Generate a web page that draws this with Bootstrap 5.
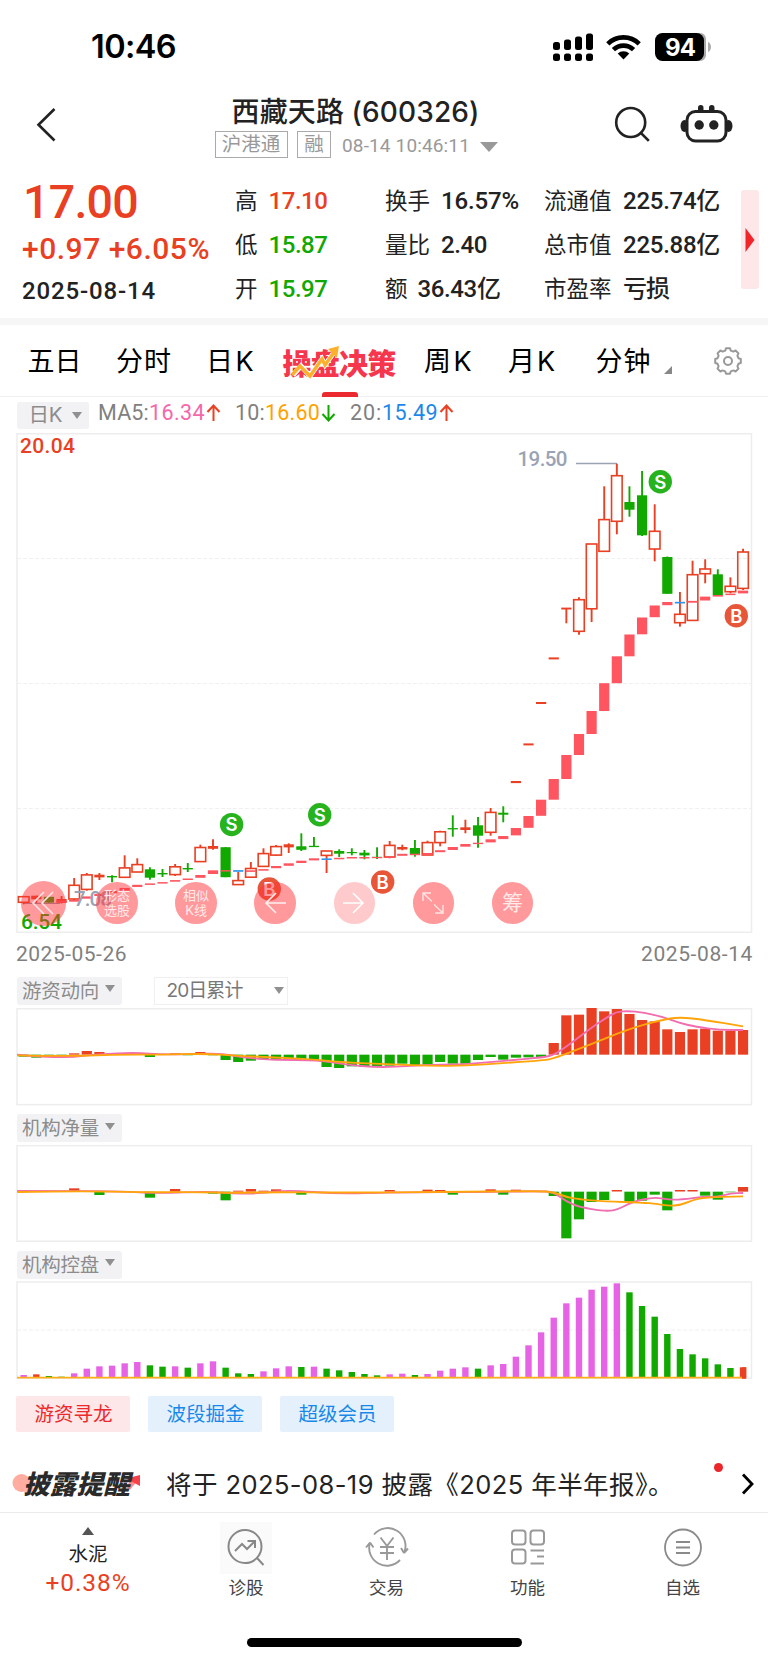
<!DOCTYPE html>
<html lang="zh-CN">
<head>
<meta charset="utf-8">
<meta name="viewport" content="width=device-width, initial-scale=1">
<title>西藏天路 (600326)</title>
<link href="https://cdn.jsdelivr.net/npm/bootstrap@5.3.0/dist/css/bootstrap.min.css" rel="stylesheet">
<style>
  :root { --up:#e93f22; --down:#11a800; --ink:#222; --soft:#808080; }
  body { width:768px; margin:0 auto; background:#fff; color:var(--ink); font-family:"Inter","Noto Sans CJK SC",sans-serif; line-height:1; overflow-x:hidden; }
  .num { font-family:"Roboto","Noto Sans CJK SC",sans-serif; }
  .fit { display:inline-block; white-space:nowrap; }
  .up { color:var(--up); } .down { color:var(--down); }
  svg { display:block; flex:none; }
  .statusbar { height:90px; padding:3px 56px 0 91px; }
  .clock { font-size:32.5px; font-weight:600; color:#000; padding-top:2px; }
  .titlebar { height:80px; }
  .stock-name { font-size:28px; font-weight:500; line-height:36px; height:37px; }
  .tagbox { border:1.5px solid #aaa; color:#999; font-size:19.5px; height:27px; line-height:24px; text-align:center; }
  .stamp { font-size:19px; color:#999; padding-top:2px; }
  .quote { height:148px; }
  .price { font-size:46.5px; font-weight:500; line-height:48px; }
  .change { font-size:30px; font-weight:500; line-height:44px; }
  .qcol > div { height:44px; line-height:44px; font-size:22.5px; white-space:nowrap; display:flex; align-items:center; }
  .qcol .num { font-size:24px; font-weight:500; }
  .more { width:18px; height:99px; background:#fde7e9; border-radius:3px; }
  .band { height:7px; background:#f6f6f6; }
  .periods { height:72px; border-bottom:1.5px solid #f0f0f0; font-size:27px; color:#000; }
  .periods .fit { line-height:74px; }
  .decide { width:114px; height:72px; }
  .decide b { font-family:"Noto Sans CJK SC",sans-serif; font-weight:900; font-size:29px; color:#f5364d; }
  .underline-bar { bottom:0; left:39px; width:36px; height:5px; border-radius:3px 3px 0 0; background:#ea2a2e; }
  .marow { height:36px; color:var(--soft); font-size:21.5px; }
  .pill { background:#f2f2f4; border-radius:3px; color:#8c8c8c; font-size:19.5px; }
  .tri { width:0; height:0; border:5px solid transparent; border-top:7px solid #909090; border-bottom:0; flex:none; }
  .dates { height:42px; padding:0 15px 0 16px; font-size:21px; color:var(--soft); }
  .subhead { padding-left:16.5px; }
  .subhead .pill { height:28px; width:105px; padding:2px 5.5px 0; }
  .picker { width:134px; height:28px; border:1.5px solid #f0f0f2; color:#777; font-size:19px; padding:0 3px 0 12px; }
  .tools { left:20.5px; bottom:7.5px; }
  .tool { width:41.4px; height:41.4px; border-radius:50%; background:rgba(255,52,56,.5); color:#ffe9e9; font-size:13px; line-height:14.5px; text-align:center; margin-left:37.7px; flex:none; }
  .tool:first-child { width:45px; height:45px; margin-left:0; }
  .tool:nth-child(2) { margin-left:30.8px; }
  .tool.dim { background:rgba(255,52,56,.26); }
  .chip { width:114px; height:36px; border-radius:2px; background:#e4f1fc; color:#1788ea; font-size:19.5px; padding-top:1px; }
  .chip.hot { background:#fde7e8; color:#ec2a2d; }
  .notice { height:65px; border-bottom:1.5px solid #ebebeb; }
  .notice-text { font-size:25.5px; }
  .notice-logo { width:130px; height:34px; }
  .notice-logo b { left:11px; top:1px; font-weight:900; font-style:italic; font-size:26.5px; line-height:34px; color:#2a2a2a; font-family:"Noto Sans CJK SC",sans-serif; z-index:1; }
  .tabs { height:107px; color:#444; font-size:17.5px; }
  .tabs .cell { flex:none; }
  .home { width:275px; height:9px; border-radius:5px; background:#000; }
</style>
</head>
<body>

<header class="statusbar d-flex align-items-center justify-content-between">
  <span class="clock fit" data-w="85">10:46</span>
  <div class="d-flex align-items-center">
    <svg width="40" height="28" viewBox="0 0 40 28">
      <g fill="#000"><rect x="0" y="9" width="7" height="8" rx="2.5"/><rect x="11" y="6.500" width="7" height="10.500" rx="2.500"/><rect x="22" y="3.500" width="7" height="13.500" rx="2.500"/><rect x="33" y="0.500" width="7" height="16.500" rx="2.500"/>
      <rect x="0" y="20.500" width="7" height="7.500" rx="2.500"/><rect x="11" y="20.500" width="7" height="7.500" rx="2.500"/><rect x="22" y="20.500" width="7" height="7.500" rx="2.500"/><rect x="33" y="20.500" width="7" height="7.500" rx="2.500"/></g>
    </svg>
    <svg style="margin-left:13px" width="35" height="26" viewBox="0 0 35 26">
      <g fill="none" stroke="#000" stroke-width="4.600"><path d="M1.800 9.800a22.500 22.500 0 0 1 31.400 0"/><path d="M7.400 15.700a14.600 14.600 0 0 1 20.200 0"/></g>
      <path d="M11.700 19.600a8.500 8.500 0 0 1 11.600 0L17.500 25.500z"/>
    </svg>
    <svg style="margin-left:14px" width="57" height="28" viewBox="0 0 57 28">
      <path d="M45 0h-3v28h3c4 0 6-3 6-7V7c0-4-2-7-6-7z" fill="#aaa"/><rect width="49" height="28" rx="7.500" fill="#000"/><path d="M53 9c4 1.500 4 8.500 0 10z" fill="#aaa"/>
      <text x="25.500" y="22.600" text-anchor="middle" font-family="Inter" font-size="24" font-weight="700" fill="#fff" textLength="31">94</text>
    </svg>
  </div>
</header>

<section class="titlebar d-flex align-items-start">
  <svg style="margin:16px 0 0 34px" width="24" height="38" viewBox="0 0 24 38"><path d="M20.500 3 4.500 18.700 20.500 34.500" fill="none" stroke="#222" stroke-width="2.600"/></svg>
  <div style="margin-left:156.500px;width:390px">
    <div class="stock-name" style="padding:4px 0 0 17px"><span class="fit" data-w="248">西藏天路 (600326)</span></div>
    <div class="d-flex align-items-center" style="margin-top:4px">
      <div class="tagbox" style="width:73px">沪港通</div>
      <div class="tagbox" style="width:34px;margin-left:9.500px">融</div>
      <span class="stamp num fit" style="margin-left:11px" data-w="128">08-14 10:46:11</span>
      <svg style="margin:4px 0 0 10px" width="18" height="10"><path d="M0 0h18L9 10z" fill="#999"/></svg>
    </div>
  </div>
  <svg style="margin:16px 0 0 9px" width="38" height="38" viewBox="0 0 38 38"><g fill="none" stroke="#222" stroke-width="2.600"><circle cx="16.700" cy="16.500" r="14.500"/><path d="m26.800 26.800 8 8"/></g></svg>
  <svg style="margin:14px 0 0 28.500px" width="54" height="40" viewBox="0 0 54 40">
    <g fill="#222"><rect x="18" y="1" width="5.500" height="9" rx="2.700"/><rect x="29" y="1" width="5.500" height="9" rx="2.700"/><ellipse cx="4.500" cy="22" rx="4" ry="6"/><ellipse cx="48.500" cy="22" rx="4" ry="6"/></g>
    <rect x="7" y="7.500" width="39" height="29.500" rx="8.500" fill="#fff" stroke="#222" stroke-width="3"/><circle cx="19.200" cy="21" r="4.700" fill="#222"/><circle cx="33.800" cy="21" r="4.700" fill="#222"/>
  </svg>
</section>

<section class="quote d-flex">
  <div style="margin-left:23px;width:212px">
    <div class="price num up" style="padding-top:8px"><span class="fit" data-w="115">17.00</span></div>
    <div class="change num up" style="margin:1px 0 0 -1px"><span class="fit" data-w="188">+0.97 +6.05%</span></div>
    <div class="num fit" style="font-size:24px;font-weight:500;line-height:40px;margin-left:-1px" data-w="134">2025-08-14</div>
  </div>
  <div class="qcol" style="width:150px;padding-top:9px">
    <div>高<span class="num up fit" style="margin-left:11px" data-w="59">17.10</span></div>
    <div>低<span class="num down fit" style="margin-left:11px" data-w="59">15.87</span></div>
    <div>开<span class="num down fit" style="margin-left:11px" data-w="59">15.97</span></div>
  </div>
  <div class="qcol" style="width:159px;padding-top:9px">
    <div>换手<span class="num fit" style="margin-left:11px" data-w="78">16.57%</span></div>
    <div>量比<span class="num fit" style="margin-left:11px" data-w="46">2.40</span></div>
    <div>额<span class="num fit" style="margin-left:10px" data-w="83">36.43亿</span></div>
  </div>
  <div class="qcol" style="width:197px;padding-top:9px">
    <div>流通值<span class="num fit" style="margin-left:11.500px" data-w="97">225.74亿</span></div>
    <div>总市值<span class="num fit" style="margin-left:11.500px" data-w="97">225.88亿</span></div>
    <div>市盈率<span class="num fit" style="margin-left:11.500px" data-w="46">亏损</span></div>
  </div>
  <div class="more d-flex align-items-center" style="margin-top:20px"><svg class="ms-1" width="10" height="24"><path d="M0.500 0 9.500 12 0.500 24z" fill="#f0262b"/></svg></div>
</section>
<div class="band"></div>

<nav class="periods d-flex">
  <span class="fit" style="margin-left:27.500px" data-w="54">五日</span>
  <span class="fit" style="margin-left:34.500px" data-w="56">分时</span>
  <span class="fit" style="margin-left:34px" data-w="50">日K</span>
  <div class="decide position-relative" style="margin-left:26.500px">
    <b class="fit" data-w="113">操盘决策</b>
    <svg class="position-absolute" style="left:7px;top:20px" width="52" height="36" viewBox="0 0 52 36"><path d="M3 30 11 21 20 31 32 14 35 20 45 6" fill="none" stroke="#fff" stroke-width="5"/><path d="M2 30 10 21 20 31 32 14 35 20 45 6" fill="none" stroke="#fcb02c" stroke-width="3.400"/><path d="M38 4 49 1 47 13z" fill="#fcb02c"/></svg>
    <span class="underline-bar position-absolute"></span>
  </div>
  <span class="fit" style="margin-left:27.500px" data-w="50">周K</span>
  <span class="fit" style="margin-left:34px" data-w="49">月K</span>
  <span class="fit" style="margin-left:38.500px" data-w="56">分钟</span>
  <svg style="margin:41px 0 0 12px" width="8" height="8"><path d="M8 0v8H0z" fill="#888"/></svg>
  <svg style="margin:21px 0 0 41px" width="30" height="30" viewBox="0 0 30 30"><g fill="none" stroke="#999" stroke-width="2"><path id="gear" stroke-linejoin="round"/><circle cx="15" cy="15" r="4"/></g></svg>
</nav>

<section class="marow num d-flex align-items-center">
  <div class="pill d-flex align-items-center" style="margin-left:16.500px;width:72px;height:27px;padding:1px 0 0 12px;font-size:20.500px"><span class="fit" data-w="34" style="font-family:Inter,'Noto Sans CJK SC'">日K</span><i class="tri" style="margin-left:9px"></i></div>
  <span class="fit" style="margin:-5px 0 0 9.500px" data-w="51">MA5:</span><span class="fit" style="margin-top:-5px;color:#f467ab" data-w="56">16.34</span>
  <svg style="margin:-5px 0 0 1px" width="15" height="18" viewBox="0 0 15 18"><path d="M7.500 17V2M1.500 8l6-6.500 6 6.500" fill="none" stroke="#e93f22" stroke-width="2"/></svg>
  <span class="fit" style="margin:-5px 0 0 14px" data-w="30">10:</span><span class="fit" style="margin-top:-5px;color:#ffa200" data-w="55">16.60</span>
  <svg style="margin:-5px 0 0 1px" width="15" height="18" viewBox="0 0 15 18"><path d="M7.500 1v15M1.500 10l6 6.500 6-6.500" fill="none" stroke="#11a800" stroke-width="2"/></svg>
  <span class="fit" style="margin:-5px 0 0 14px" data-w="32">20:</span><span class="fit" style="margin-top:-5px;color:#1e88ea" data-w="56">15.49</span>
  <svg style="margin:-5px 0 0 1px" width="15" height="18" viewBox="0 0 15 18"><path d="M7.500 17V2M1.500 8l6-6.500 6 6.500" fill="none" stroke="#e93f22" stroke-width="2"/></svg>
</section>

<section class="position-relative">
  <svg id="kline" width="768" height="500" viewBox="0 433 768 500"></svg>
  <div class="tools position-absolute d-flex align-items-center">
    <div class="tool d-flex align-items-center justify-content-center"><svg width="24" height="24" viewBox="0 0 24 24" fill="none" stroke="#ffe4e4" stroke-width="1.600"><path d="M13 1 2 12l11 11M22 1 11 12l11 11"/></svg></div>
    <div class="tool d-flex align-items-center justify-content-center">形态<br>选股</div>
    <div class="tool d-flex align-items-center justify-content-center">相似<br>K线</div>
    <div class="tool d-flex align-items-center justify-content-center"><svg width="22" height="22" viewBox="0 0 22 22" fill="none" stroke="#fff0f0" stroke-width="1.600"><path d="M22 11H2M12 1 2 11l10 10"/></svg></div>
    <div class="tool dim d-flex align-items-center justify-content-center"><svg width="22" height="22" viewBox="0 0 22 22" fill="none" stroke="#fff" stroke-width="1.600"><path d="M0 11h20M10 1l10 10-10 10"/></svg></div>
    <div class="tool d-flex align-items-center justify-content-center"><svg width="22" height="22" viewBox="0 0 22 22" fill="none" stroke="#ffe4e4" stroke-width="1.400"><path d="M1 9V1h8M1 1l9 8.500M21 13v8h-8M21 21l-9-8.500"/></svg></div>
    <div class="tool d-flex align-items-center justify-content-center" style="font-size:21px">筹</div>
  </div>
</section>
<div class="dates num d-flex align-items-center justify-content-between"><span class="fit" data-w="111">2025-05-26</span><span class="fit" data-w="112">2025-08-14</span></div>

<div class="subhead d-flex" style="height:33px;padding-top:1.500px">
  <div class="pill d-flex align-items-center"><span class="fit" data-w="77">游资动向</span><i class="tri" style="margin:-6px 0 0 6px"></i></div>
  <div class="picker d-flex align-items-center justify-content-between" style="margin-left:32px"><span class="fit" data-w="76">20日累计</span><i class="tri"></i></div>
</div>
<svg id="sub1" width="768" height="98" viewBox="0 1008 768 98"></svg>
<div class="subhead" style="height:39px;padding-top:8px"><div class="pill d-flex align-items-center"><span class="fit" data-w="77">机构净量</span><i class="tri" style="margin:-6px 0 0 6px"></i></div></div>
<svg id="sub2" width="768" height="97" viewBox="0 1145 768 97"></svg>
<div class="subhead" style="height:39px;padding-top:8.500px"><div class="pill d-flex align-items-center"><span class="fit" data-w="77">机构控盘</span><i class="tri" style="margin:-6px 0 0 6px"></i></div></div>
<svg id="sub3" width="768" height="99" viewBox="0 1281 768 99"></svg>

<div class="d-flex" style="height:68px;padding:16.400px 0 0 16.400px;gap:18px">
  <div class="chip hot d-flex align-items-center justify-content-center">游资寻龙</div>
  <div class="chip d-flex align-items-center justify-content-center">波段掘金</div>
  <div class="chip d-flex align-items-center justify-content-center">超级会员</div>
</div>

<section class="notice d-flex align-items-center">
  <div class="notice-logo position-relative" style="margin:4px 0 0 12px">
    <svg width="130" height="38" viewBox="0 0 130 38"><circle cx="9.500" cy="18" r="9" fill="#ffada0"/><circle cx="17" cy="25" r="5" fill="#ffb3a7"/><path d="M116 23 122 16" stroke="#ff8a8c" stroke-width="5"/><path d="M114 13.500 128 10V21z" fill="#f8404a"/></svg>
    <b class="fit position-absolute" data-w="107">披露提醒</b>
  </div>
  <span class="notice-text fit" style="margin:9px 0 0 24px" data-w="508">将于 2025-08-19 披露《2025 年半年报》。</span>
  <svg style="margin:-26px 0 0 40px" width="9" height="9"><circle cx="4.500" cy="4.500" r="4.500" fill="#ec252b"/></svg>
  <svg style="margin:7px 0 0 17px" width="15" height="24" viewBox="0 0 15 24"><path d="M3 2.500 12 12 3 21.500" fill="none" stroke="#000" stroke-width="2.800"/></svg>
</section>

<nav class="tabs d-flex text-center">
  <div class="cell" style="width:176px;padding-top:13.500px">
    <svg class="mx-auto" width="12" height="8"><path d="M0 8h12L6 0z" fill="#555"/></svg>
    <div style="font-size:19.500px;line-height:32px;margin-top:3px;color:#222">水泥</div>
    <div class="num up" style="font-size:24.500px;line-height:26px"><span class="fit" data-w="85">+0.38%</span></div>
  </div>
  <div class="cell" style="width:140px;padding-top:9px">
    <div class="mx-auto" style="width:52px;height:52px;background:#fafafa;padding:6px 7px"><svg width="38" height="40" viewBox="0 0 38 40" fill="none" stroke="#888" stroke-width="2"><circle cx="18" cy="18.500" r="16.500"/><path d="m30 30 6.500 7M8 23l7-7 5 5 8-8M20.500 13H28v7"/></svg></div>
    <div style="line-height:27px;">诊股</div>
  </div>
  <div class="cell" style="width:141px;padding-top:9px">
    <svg class="mx-auto" width="44" height="52" viewBox="0 0 44 52" fill="none" stroke="#999" stroke-width="1.900"><path d="M9 12.500A17.800 17.800 0 0 1 39 31M35 38A17.800 17.800 0 0 1 5 20.500M39 31l4-4.500M39 31l-3-5M5 20.500 1 25.500M5 20.500l3.500 5M15.500 15.500l6.500 8.500 6.500-8.500M22 24v14M15 25h14M15 31h14"/></svg>
    <div style="line-height:27px;">交易</div>
  </div>
  <div class="cell" style="width:141px;padding-top:9px">
    <svg class="mx-auto" width="36" height="52" viewBox="0 0 36 52" fill="none" stroke="#999" stroke-width="2"><rect x="2" y="8.500" width="13.500" height="14" rx="3"/><rect x="20.500" y="8.500" width="13.500" height="14" rx="3"/><rect x="2" y="27.500" width="13.500" height="14" rx="3"/><path d="M20.500 28.500H34M27 34.500h7M20.500 41.500H34"/></svg>
    <div style="line-height:27px;">功能</div>
  </div>
  <div class="cell" style="width:169px;padding-top:9px">
    <svg class="mx-auto" width="40" height="52" viewBox="0 0 40 52" fill="none" stroke="#8a8a8a" stroke-width="1.800"><circle cx="20" cy="25.500" r="18"/><path d="M13 20h14M13 25.500h14M13 31h14"/></svg>
    <div style="line-height:27px;">自选</div>
  </div>
</nav>
<div style="height:42px;padding-top:18px"><div class="home mx-auto"></div></div>

<script src="https://cdn.jsdelivr.net/npm/bootstrap@5.3.0/dist/js/bootstrap.bundle.min.js"></script>
<script>
  const UP = '#e93f22', DOWN = '#11a800', PINK = '#ff5560', BLUE = '#2b97f0';
  const X = i => 23.7 + 12.62 * i;
  const rect = (x, y, w, h, f) => `<rect x="${x}" y="${y}" width="${w}" height="${h}" fill="${f}"/>`;
  const line = (x1, y1, x2, y2, c, w = 1.9) => `<path d="M${x1} ${y1}L${x2} ${y2}" stroke="${c}" stroke-width="${w}"/>`;
  const frame = (t, b) => `<rect x="17" y="${t}" width="734.5" height="${b - t}" fill="none" stroke="#ededed" stroke-width="1.5"/>`;
  const grid = y => `<path d="M17 ${y}H751" stroke="#f0f0f0" stroke-width="1" stroke-dasharray="4 2"/>`;

  // [kind, body top, body bottom, high, low]; h = hollow, r = solid red, g = solid green; chart units
  const candles = [
    ['h',896.7,902.3,896,904.3],['r',895.7,899.3,895.7,903],['g',896.8,902.6,896.8,902.6],['r',899,902.7,896,903.5],
    ['h',885.3,899,878,900.7],['h',874.9,889.4,873,890.7],['r',874.7,877.4,873,880],['g',876,877.4,875.3,882.3],
    ['h',867.9,877.3,855.3,877.3],['h',864.6,872,858.3,872],['g',869.3,877.7,867.3,879.7],['g',873,874.4,869,877],
    ['h',866.8,874.6,864,876],['g',868,869.4,863,872],['h',847.5,861.6,844.7,861.6],['r',846,848.8,839.3,849.7],
    ['g',847.2,877.2,847.2,877.2],['h',880.6,884.6,872,884.6],['h',868.5,877.2,862,877.2],['h',853.6,866.4,848.3,866.4],
    ['h',846.6,855.1,845,856],['r',844.3,847.4,843.3,853],['g',846.3,849.8,833.3,851],['g',845.8,847.1,837,847],
    ['h',851,855.4,851,873],['g',851,853.7,849.3,857],['g',852,853.2,848.3,855.3],['g',852.7,855.4,850,859.3],
    ['g',856.8,858,847.3,859],['h',845.4,857,841,858.3],['r',847,849.5,844.7,850.3],['g',848,854,840,856.7],
    ['h',842.6,855,840.7,855],['h',831.8,842.6,830.7,846.3],['g',828.1,829.4,815.3,836.7],['r',827.3,830,819.7,833.3],
    ['g',825.3,835.7,817,847.7],['h',812.4,832.3,808,835.7],['g',812.7,814.7,806.3,822.3],['r',781,783.1,782,782],
    ['r',743.4,745.4,744,744],['r',702,704,703,703],['r',657.4,659.4,658,658],['r',607.6,609.5,608,623.3],
    ['h',599.7,631.3,597.3,634.7],['h',544,608.8,544,622],['h',519.6,551.3,486.3,551.3],['h',475.7,521.3,463.7,534.3],
    ['g',502,509.7,486.3,516.7],['g',495.3,535.3,471,536],['h',531.3,549,504.3,561.3],['g',557,593.8,556.5,593.8],
    ['h',614.3,622.7,592,626.7],['h',574.7,620.4,560.7,620.4],['h',569,573.7,559.3,583.3],['g',574.3,595,569.3,595],
    ['h',586.3,591.7,577.3,593.3],['h',552,588.4,548.7,590]];
  // trend blocks: [top, bottom], starting with the first candle
  const trend = [
    [902.6,903.6],[902.6,903.6],[902.8,903.8],[900.6,903],[900,901.7],[896.4,898.7],[893.8,896],[891,893.2],[888,890.7],[884.8,887],[883.4,884.9],
    [882.1,883.6],[880.1,881.7],[878.5,880],[875,877.8],[870.3,874],[870.1,871.5],[870.1,871.8,1],[870.3,871.9],[869.1,870.7],
    [866,868.2],[863.3,865.8],[860.7,863],[858.3,860.4],[858.4,860,1],[857.8,859.3],[857,858.5],[857,858.5],[857,858.2],[856.7,858],
    [853.8,855.8],[853.7,855.2],[853,855],[850.2,852.2],[847,850],[844,846.7],[842.7,844.1],[839.3,842.4],[836,839.1],[828,835.4],
    [816,827.8],[799.7,815.8],[779,799.7],[755,779],[734,755],[711,734],[683.2,711],[656.3,683.2],[634.5,656.3],[617.5,634.3],
    [605.5,617.2],[602,605.2],[601.8,603.5,1],[600.9,602.7],[596.6,600.5],[595,596.6],[593.6,595.1],[590.6,593.4]];

  let k = grid(558.5) + grid(683.5) + grid(808.5) + frame(433.75, 932.25);
  k += line(576, 463.4, 617, 463.4, '#9aa3b4', 1.5) + line(23, 903.3, 60, 903.3, '#8e98aa', 1.3);
  candles.forEach(([t, a, b, hi, lo], i) => {
    const x = X(i), c = t === 'g' ? DOWN : UP;
    if (t === 'h') {
      if (hi < a) k += line(x, hi, x, a, c);
      if (lo > b) k += line(x, b, x, lo, c);
      k += `<rect x="${x - 5.3}" y="${a}" width="10.6" height="${b - a}" fill="none" stroke="${c}" stroke-width="1.6"/>`;
    } else {
      k += line(x, hi, x, lo, c) + rect(x - 5.1, a, 10.2, b - a, c);
    }
  });
  trend.forEach(([a, b, blue], i) => { if (i > 2) k += rect(X(i) - 5.1, a, 10.2, b - a, blue ? BLUE : PINK); });
  const label = (x, y, s, c, w, size, weight = 400) => `<text x="${x}" y="${y}" font-family="Roboto" font-size="${size}" font-weight="${weight}" fill="${c}" textLength="${w}">${s}</text>`;
  k += label(20, 452.8, '20.04', UP, 55, 21, 500) + label(517.500, 466, '19.50', '#9aa3b4', 50, 20.5, 500)
     + label(21, 928.7, '6.54', DOWN, 41, 21, 500) + label(74, 906, '7.08', '#9aa3b4', 38, 20.5, 500);
  [[231.6,824.6,'S'],[319.7,814.7,'S'],[660.3,481.7,'S'],[736.3,615.7,'B'],[269.3,889,'B'],[382.7,882,'B']].forEach(([x, y, s]) => {
    k += `<circle cx="${x}" cy="${y}" r="11.7" fill="${s === 'S' ? '#26b31e' : '#e8563a'}"/><text x="${x}" y="${y + 6.8}" text-anchor="middle" font-family="Inter" font-size="18.5" font-weight="600" fill="#fff">${s}</text>`;
  });
  document.getElementById('kline').innerHTML = k;

  const poly = (pts, c, oy) => {
    const p = pts.map(([x, y]) => [x / 2.0417, oy + y / 3]);
    let d = `M${p[0]}`;
    for (let i = 1; i < p.length - 1; i++) d += `Q${p[i]} ${(p[i][0] + p[i+1][0]) / 2} ${(p[i][1] + p[i+1][1]) / 2}`;
    return `<path d="${d}L${p[p.length - 1]}" fill="none" stroke="${c}" stroke-width="1.9"/>`;
  };

  // hot money flow: bar ends against the zero line at 254
  const flow = [260,263,256.5,256.5,250,243,246,252,252,252,261,253,250,254.5,246,254.5,270,276,272,268,267,268,268,272,291,294,289,291,290,287,281,285,284,276,281,281,270,261,269,263,262,261,219,136,134,114,124,117,132,150,154,178,186,178,176,182,182,180];
  const bars = (vals, zero, oy) => vals.map((v, i) => v === null ? '' : rect(X(i) - 5.1, oy + Math.min(v, zero) / 3, 10.2, Math.max(Math.abs(v - zero) / 3, .6), v < zero ? UP : DOWN)).join('');
  document.getElementById('sub1').innerHTML = frame(1008.75, 1104.6) + bars(flow, 254, 970)
    + poly([[35,254],[60,258],[110,261],[150,261],[200,252],[280,248],[330,254],[400,252],[450,250],[500,263],[560,270],[650,270],[700,283],[775,293],[840,287],[900,284],[960,282],[1040,271],[1110,262],[1132,254],[1160,226],[1208,173],[1234,147],[1258,125],[1285,123],[1310,127],[1350,139],[1390,160],[1420,170],[1470,180],[1517,180]], '#f26db0', 970)
    + poly([[35,256],[130,259],[230,254],[330,254],[420,251],[480,257],[560,262],[640,268],[700,277],[800,283],[880,288],[950,287],[1030,279],[1110,271],[1132,265],[1208,222],[1285,176],[1350,150],[1387,141],[1440,150],[1517,169]], '#ffa50a', 970);

  const net = Array(58).fill(null);
  Object.entries({4:235,6:255,10:263,12:237,15:251,16:271,17:242,18:237,19:242,20:238,22:254,29:240,32:239,33:240,34:254,37:238,38:254,39:239,42:258,43:385,44:328,45:276,46:270,48:275,49:272,50:254,51:301,54:257,55:269,56:246,57:231}).forEach(([i, v]) => net[i] = v);
  document.getElementById('sub2').innerHTML = frame(1145.6, 1241.2) + bars(net, 245, 1110)
    + [47,52,53].map(i => rect(X(i) - 5.1, 1190, 10.2, 1.5, UP)).join('')
    + poly([[35,243],[150,243],[250,244],[320,250],[430,244],[480,252],[540,249],[590,240],[690,252],[800,247],[1000,246],[1100,243],[1130,246],[1156,274],[1182,291],[1234,304],[1260,300],[1290,276],[1335,261],[1365,269],[1390,269],[1440,260],[1465,261],[1492,250],[1517,249]], '#f26db0', 1110)
    + poly([[35,246],[160,243],[300,247],[400,246],[480,249],[560,246],[700,248],[900,246],[1100,243],[1130,246],[1156,261],[1182,268],[1234,274],[1310,278],[1340,281],[1365,288],[1390,285],[1415,270],[1440,262],[1517,259]], '#ffa50a', 1110);

  const holdTop = [390,388,393,395,385,371,364,362,355,351,361,365,364,368,355,349,368,385,387,379,370,364,366,365,371,376,381,387,391,388,386,390,387,377,371,367,371,361,357,335,301,262,218,175,158,134,125,115,142,183,215,267,312,328,340,358,369,367];
  const holdKind = 'mrggmmmmmmggmgmmgggmmmgmgggggmmgmmmmgmmmmmmmmmmmgggggggggr';
  const tone = { m:'#e663e6', r:UP, g:DOWN };
  document.getElementById('sub3').innerHTML = grid(1330) + frame(1282, 1378.3)
    + holdTop.map((v, i) => rect(X(i) - 3.2, 1245 + v / 3, 6.4, (399 - v) / 3, tone[holdKind[i]])).join('')
    + line(17, 1377.6, 743, 1377.6, '#ffae1a', 1.8) + rect(X(57) - 1, 1367.3, 4.2, 11.500, UP);

  // eight-toothed settings gear
  let g = '';
  for (let i = 0; i < 8; i++) [[-15,10.8],[-9,13],[9,13],[15,10.8]].forEach(([o, r]) => {
    const a = (i * 45 + o - 90) * Math.PI / 180;
    g += `${g ? 'L' : 'M'}${(15 + r * Math.cos(a)).toFixed(1)} ${(15 + r * Math.sin(a)).toFixed(1)}`;
  });
  document.getElementById('gear').setAttribute('d', g + 'Z');

  // track each label to its column width
  document.querySelectorAll('.fit').forEach(el => {
    const n = [...el.textContent].length, w = el.getBoundingClientRect().width;
    el.style.letterSpacing = ((el.dataset.w - w) / n).toFixed(3) + 'px';
  });
</script>
</body>
</html>
